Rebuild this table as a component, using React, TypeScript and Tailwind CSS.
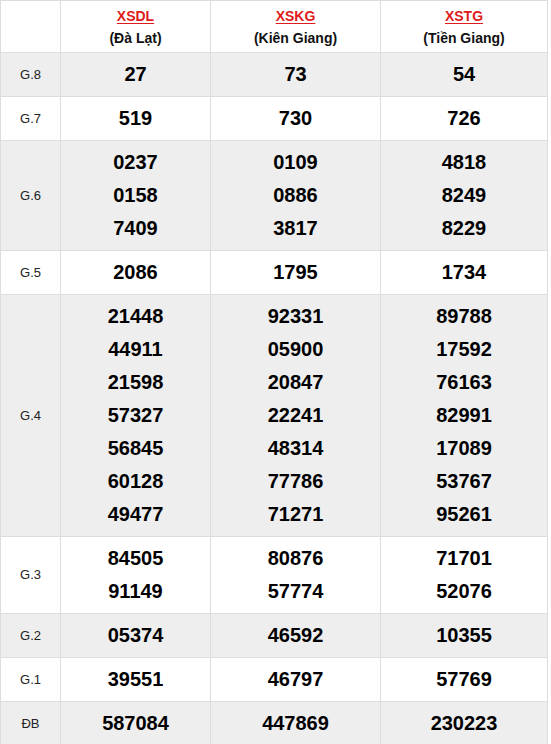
import React from 'react';

const provinces = [
  { code: 'XSDL', name: '(Đà Lạt)', width: 'w-[150px]' },
  { code: 'XSKG', name: '(Kiên Giang)', width: 'w-[170px]' },
  { code: 'XSTG', name: '(Tiền Giang)', width: 'w-[167px]' },
];

const prizes = [
  { label: 'G.8', values: [['27'], ['73'], ['54']] },
  { label: 'G.7', values: [['519'], ['730'], ['726']] },
  {
    label: 'G.6',
    values: [
      ['0237', '0158', '7409'],
      ['0109', '0886', '3817'],
      ['4818', '8249', '8229'],
    ],
  },
  { label: 'G.5', values: [['2086'], ['1795'], ['1734']] },
  {
    label: 'G.4',
    values: [
      ['21448', '44911', '21598', '57327', '56845', '60128', '49477'],
      ['92331', '05900', '20847', '22241', '48314', '77786', '71271'],
      ['89788', '17592', '76163', '82991', '17089', '53767', '95261'],
    ],
  },
  {
    label: 'G.3',
    values: [
      ['84505', '91149'],
      ['80876', '57774'],
      ['71701', '52076'],
    ],
  },
  { label: 'G.2', values: [['05374'], ['46592'], ['10355']] },
  { label: 'G.1', values: [['39551'], ['46797'], ['57769']] },
  { label: 'ĐB', values: [['587084'], ['447869'], ['230223']] },
];

const App = () => {
  return (
    <div className="bg-white w-[551px] min-h-[744px] font-['Liberation_Sans',Arial,sans-serif] text-black">
      <div className="w-[548px] border-l border-t border-[#dddddd]">
        <div className="flex border-b border-[#dddddd] bg-white">
          <div className="w-[60px] border-r border-[#dddddd]" />
          {provinces.map((p) => (
            <div
              key={p.code}
              className={`${p.width} border-r border-[#dddddd] flex flex-col items-center pt-[4px] pb-[3px] text-[14px] font-bold leading-[22px]`}
            >
              <span className="text-[#e01b1b] underline underline-offset-2">{p.code}</span>
              <span className="text-[#111]">{p.name}</span>
            </div>
          ))}
        </div>

        {prizes.map((row, i) => (
          <div
            key={row.label}
            className={`flex border-b border-[#dddddd] ${i % 2 === 0 ? 'bg-[#eeeeee]' : 'bg-white'}`}
          >
            <div className="w-[60px] border-r border-[#dddddd] flex items-center justify-center text-[13px] text-[#222]">
              {row.label}
            </div>
            {row.values.map((vals, j) => (
              <div
                key={j}
                className={`${provinces[j].width} border-r border-[#dddddd] flex flex-col items-center py-[5px] text-[20px] font-bold leading-[33px]`}
              >
                {vals.map((v) => (
                  <span key={v}>{v}</span>
                ))}
              </div>
            ))}
          </div>
        ))}
      </div>
    </div>
  );
};

export default App;
